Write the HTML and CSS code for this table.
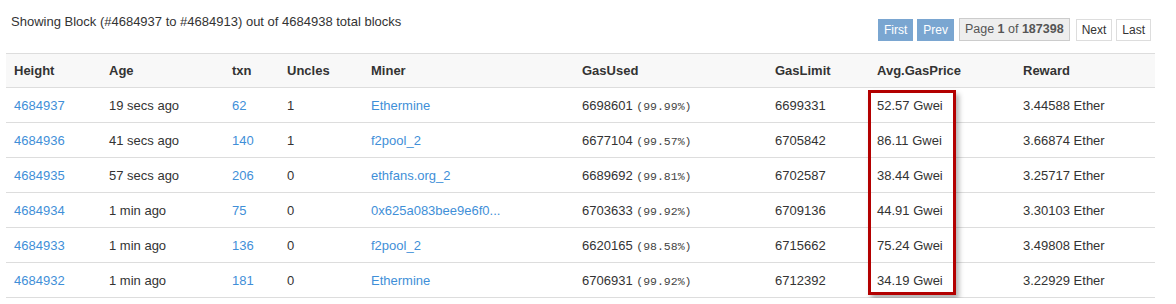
FILE: index.html
```html
<!DOCTYPE html>
<html>
<head>
<meta charset="utf-8">
<link rel="stylesheet" href="styles.css">
</head>
<body>
<div class="page">
  <div class="topbar">
    <div class="summary">Showing Block (#4684937 to #4684913) out of 4684938 total blocks</div>
    <div class="pager">
      <a class="btn btn-blue">First</a>
      <a class="btn btn-blue">Prev</a>
      <span class="pageinfo">Page <b>1</b> of <b>187398</b></span>
      <a class="btn btn-white">Next</a>
      <a class="btn btn-white">Last</a>
    </div>
  </div>
  <div class="tablewrap">
    <table class="blocks">
      <colgroup>
        <col class="c1"><col class="c2"><col class="c3"><col class="c4"><col class="c5"><col class="c6"><col class="c7"><col class="c8"><col class="c9">
      </colgroup>
      <thead>
        <tr><th>Height</th><th>Age</th><th>txn</th><th>Uncles</th><th>Miner</th><th>GasUsed</th><th>GasLimit</th><th>Avg.GasPrice</th><th>Reward</th></tr>
      </thead>
      <tbody>
        <tr><td><a>4684937</a></td><td>19 secs ago</td><td><a>62</a></td><td>1</td><td><a>Ethermine</a></td><td>6698601 <span class="pct">(99.99%)</span></td><td>6699331</td><td>52.57 Gwei</td><td>3.44588 Ether</td></tr>
        <tr><td><a>4684936</a></td><td>41 secs ago</td><td><a>140</a></td><td>1</td><td><a>f2pool_2</a></td><td>6677104 <span class="pct">(99.57%)</span></td><td>6705842</td><td>86.11 Gwei</td><td>3.66874 Ether</td></tr>
        <tr><td><a>4684935</a></td><td>57 secs ago</td><td><a>206</a></td><td>0</td><td><a>ethfans.org_2</a></td><td>6689692 <span class="pct">(99.81%)</span></td><td>6702587</td><td>38.44 Gwei</td><td>3.25717 Ether</td></tr>
        <tr><td><a>4684934</a></td><td>1 min ago</td><td><a>75</a></td><td>0</td><td><a>0x625a083bee9e6f0...</a></td><td>6703633 <span class="pct">(99.92%)</span></td><td>6709136</td><td>44.91 Gwei</td><td>3.30103 Ether</td></tr>
        <tr><td><a>4684933</a></td><td>1 min ago</td><td><a>136</a></td><td>0</td><td><a>f2pool_2</a></td><td>6620165 <span class="pct">(98.58%)</span></td><td>6715662</td><td>75.24 Gwei</td><td>3.49808 Ether</td></tr>
        <tr><td><a>4684932</a></td><td>1 min ago</td><td><a>181</a></td><td>0</td><td><a>Ethermine</a></td><td>6706931 <span class="pct">(99.92%)</span></td><td>6712392</td><td>34.19 Gwei</td><td>3.22929 Ether</td></tr>
      </tbody>
    </table>
    <div class="highlight"></div>
  </div>
</div>
</body>
</html>
```
FILE: styles.css
```css
html, body {
  margin: 0;
  padding: 0;
  background: #fff;
}
body {
  font-family: "Liberation Sans", Arial, sans-serif;
  font-size: 13px;
  color: #333;
}
.page {
  padding: 0 25px 0 6px;
}
.topbar {
  display: flex;
  justify-content: space-between;
  align-items: flex-start;
  height: 53px;
}
.summary {
  padding: 14px 0 0 5px;
  line-height: 15px;
}
.pager {
  display: flex;
  align-items: center;
  padding-top: 18px;
}
.btn {
  display: inline-block;
  font-size: 12px;
  line-height: 14px;
  padding: 3px 5px;
  border: 1px solid #ddd;
  cursor: pointer;
}
.btn-blue {
  background: #7aa6d1;
  border-color: #7aa6d1;
  color: #fff;
  padding: 3px 5px;
  margin-right: 4px;
}
.btn-white {
  background: #fff;
  color: #333;
  margin-left: 4px;
}
.pageinfo {
  display: inline-block;
  font-size: 12.5px;
  line-height: 16px;
  padding: 2px 5px 3px;
  background: #eee;
  border: 1px solid #ccc;
  color: #555;
  margin-left: 1px;
  margin-right: 2px;
}
.tablewrap {
  position: relative;
}
.blocks {
  width: 1149px;
  border-collapse: collapse;
  table-layout: fixed;
}
.c1 { width: 95px; }
.c2 { width: 123px; }
.c3 { width: 55px; }
.c4 { width: 84px; }
.c5 { width: 211px; }
.c6 { width: 193px; }
.c7 { width: 102px; }
.c8 { width: 146px; }
.c9 { width: 140px; }
.blocks th, .blocks td {
  text-align: left;
  padding: 0 8px;
  height: 34px;
  border-bottom: 1px solid #ddd;
  white-space: nowrap;
  overflow: hidden;
}
.blocks thead th {
  background: #f8f8f8;
  border-top: 1px solid #ddd;
  font-weight: bold;
  height: 33px;
}
.blocks a {
  color: #3f8fd8;
  text-decoration: none;
}
.pct {
  font-family: "Liberation Mono", "Courier New", monospace;
  font-size: 11.5px;
  color: #444;
}
.highlight {
  position: absolute;
  left: 862px;
  top: 37px;
  width: 82px;
  height: 199px;
  border: 3px solid #b30000;
  box-shadow: 3px 4px 5px rgba(0, 0, 0, 0.3);
  pointer-events: none;
}
```
